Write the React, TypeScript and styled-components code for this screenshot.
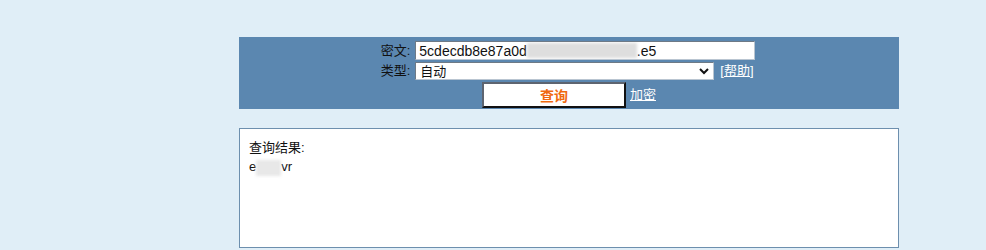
import React from "react";
import styled, { createGlobalStyle } from "styled-components";

const Global = createGlobalStyle`
  html, body { margin: 0; padding: 0; background: #e0eef7; }
  body { font-family: "Liberation Sans", "Noto Sans CJK SC", sans-serif; font-size: 13px; color: #111; }
`;

const Page = styled.div`
  padding: 37px 0 0 239px;
`;

const Panel = styled.form`
  width: 660px;
  height: 72px;
  box-sizing: border-box;
  background: #5b87b0;
  padding-top: 4px;
  display: flex;
  flex-direction: column;
  align-items: center;
`;

const FieldGrid = styled.div`
  display: grid;
  grid-template-columns: auto 340px;
  row-gap: 2px;
  column-gap: 5px;
  align-items: center;
  margin-left: -2px;
`;

const Label = styled.label`
  text-align: right;
  font-size: 13px;
  line-height: 18px;
  color: #111;
  white-space: nowrap;
`;

const TextBox = styled.div`
  box-sizing: border-box;
  height: 19px;
  width: 340px;
  background: #fff;
  border: 1px solid;
  border-color: #6e7a86 #b9c5d1 #b9c5d1 #6e7a86;
  padding: 0 3px;
  display: flex;
  align-items: center;
  font-size: 14px;
  color: #111;
  white-space: nowrap;
  overflow: hidden;
`;

const Redacted = styled.span<{ $w: number; $h: number; $tone?: string }>`
  display: inline-block;
  width: ${(p) => p.$w}px;
  height: ${(p) => p.$h}px;
  background: ${(p) => p.$tone ?? "#dedede"};
  filter: blur(1.5px);
  vertical-align: middle;
`;

const SelectRow = styled.div`
  display: flex;
  align-items: center;
  gap: 6px;
`;

const SelectWrap = styled.div`
  position: relative;
  width: 299px;
  height: 18px;
`;

const Select = styled.select`
  appearance: none;
  -webkit-appearance: none;
  box-sizing: border-box;
  width: 100%;
  height: 100%;
  background: #fff;
  border: 1px solid;
  border-color: #6e7a86 #b9c5d1 #b9c5d1 #6e7a86;
  border-radius: 0;
  padding: 0 0 0 4px;
  font-family: "Liberation Sans", "Noto Sans CJK SC", sans-serif;
  font-size: 13px;
  color: #111;
  outline: none;
`;

const Chevron = styled.svg`
  position: absolute;
  right: 5px;
  top: 5px;
  width: 10px;
  height: 8px;
  pointer-events: none;
`;

const LightLink = styled.a`
  color: #fff;
  text-decoration: underline;
  font-size: 13px;
  line-height: 18px;
  white-space: nowrap;
  cursor: pointer;
`;

const ActionRow = styled.div`
  display: flex;
  align-items: center;
  gap: 4px;
  margin-top: 2px;
`;

const QueryButton = styled.button`
  box-sizing: border-box;
  width: 144px;
  height: 26px;
  background: #fff;
  border: 2px solid;
  border-color: #5d6470 #111 #111 #5d6470;
  color: #f06a0f;
  font-family: "Liberation Sans", "Noto Sans CJK SC", sans-serif;
  font-size: 14px;
  font-weight: bold;
  padding: 0;
  cursor: pointer;
`;

const ResultBox = styled.div`
  box-sizing: border-box;
  width: 660px;
  height: 120px;
  margin-top: 19px;
  background: #fff;
  border: 1px solid #6d8fae;
  padding: 9px 9px;
  font-size: 13px;
  line-height: 19px;
  color: #111;
`;

const ResultLine = styled.div`
  white-space: nowrap;
`;

export default function App() {
  return (
    <>
      <Global />
      <Page>
        <Panel onSubmit={(e) => e.preventDefault()}>
          <FieldGrid>
            <Label>密文:</Label>
            <TextBox role="textbox">
              5cdecdb8e87a0d
              <Redacted $w={110} $h={15} />
              .e5
            </TextBox>
            <Label>类型:</Label>
            <SelectRow>
              <SelectWrap>
                <Select defaultValue="auto">
                  <option value="auto">自动</option>
                </Select>
                <Chevron viewBox="0 0 10 8">
                  <path d="M1 2 L5 6 L9 2" fill="none" stroke="#111" strokeWidth="2" />
                </Chevron>
              </SelectWrap>
              <LightLink>[帮助]</LightLink>
            </SelectRow>
          </FieldGrid>
          <ActionRow>
            <QueryButton type="submit">查询</QueryButton>
            <LightLink>加密</LightLink>
          </ActionRow>
        </Panel>
        <ResultBox>
          <ResultLine>查询结果:</ResultLine>
          <ResultLine>
            e<Redacted $w={25} $h={16} $tone="#e8e8e8" />vr
          </ResultLine>
        </ResultBox>
      </Page>
    </>
  );
}
